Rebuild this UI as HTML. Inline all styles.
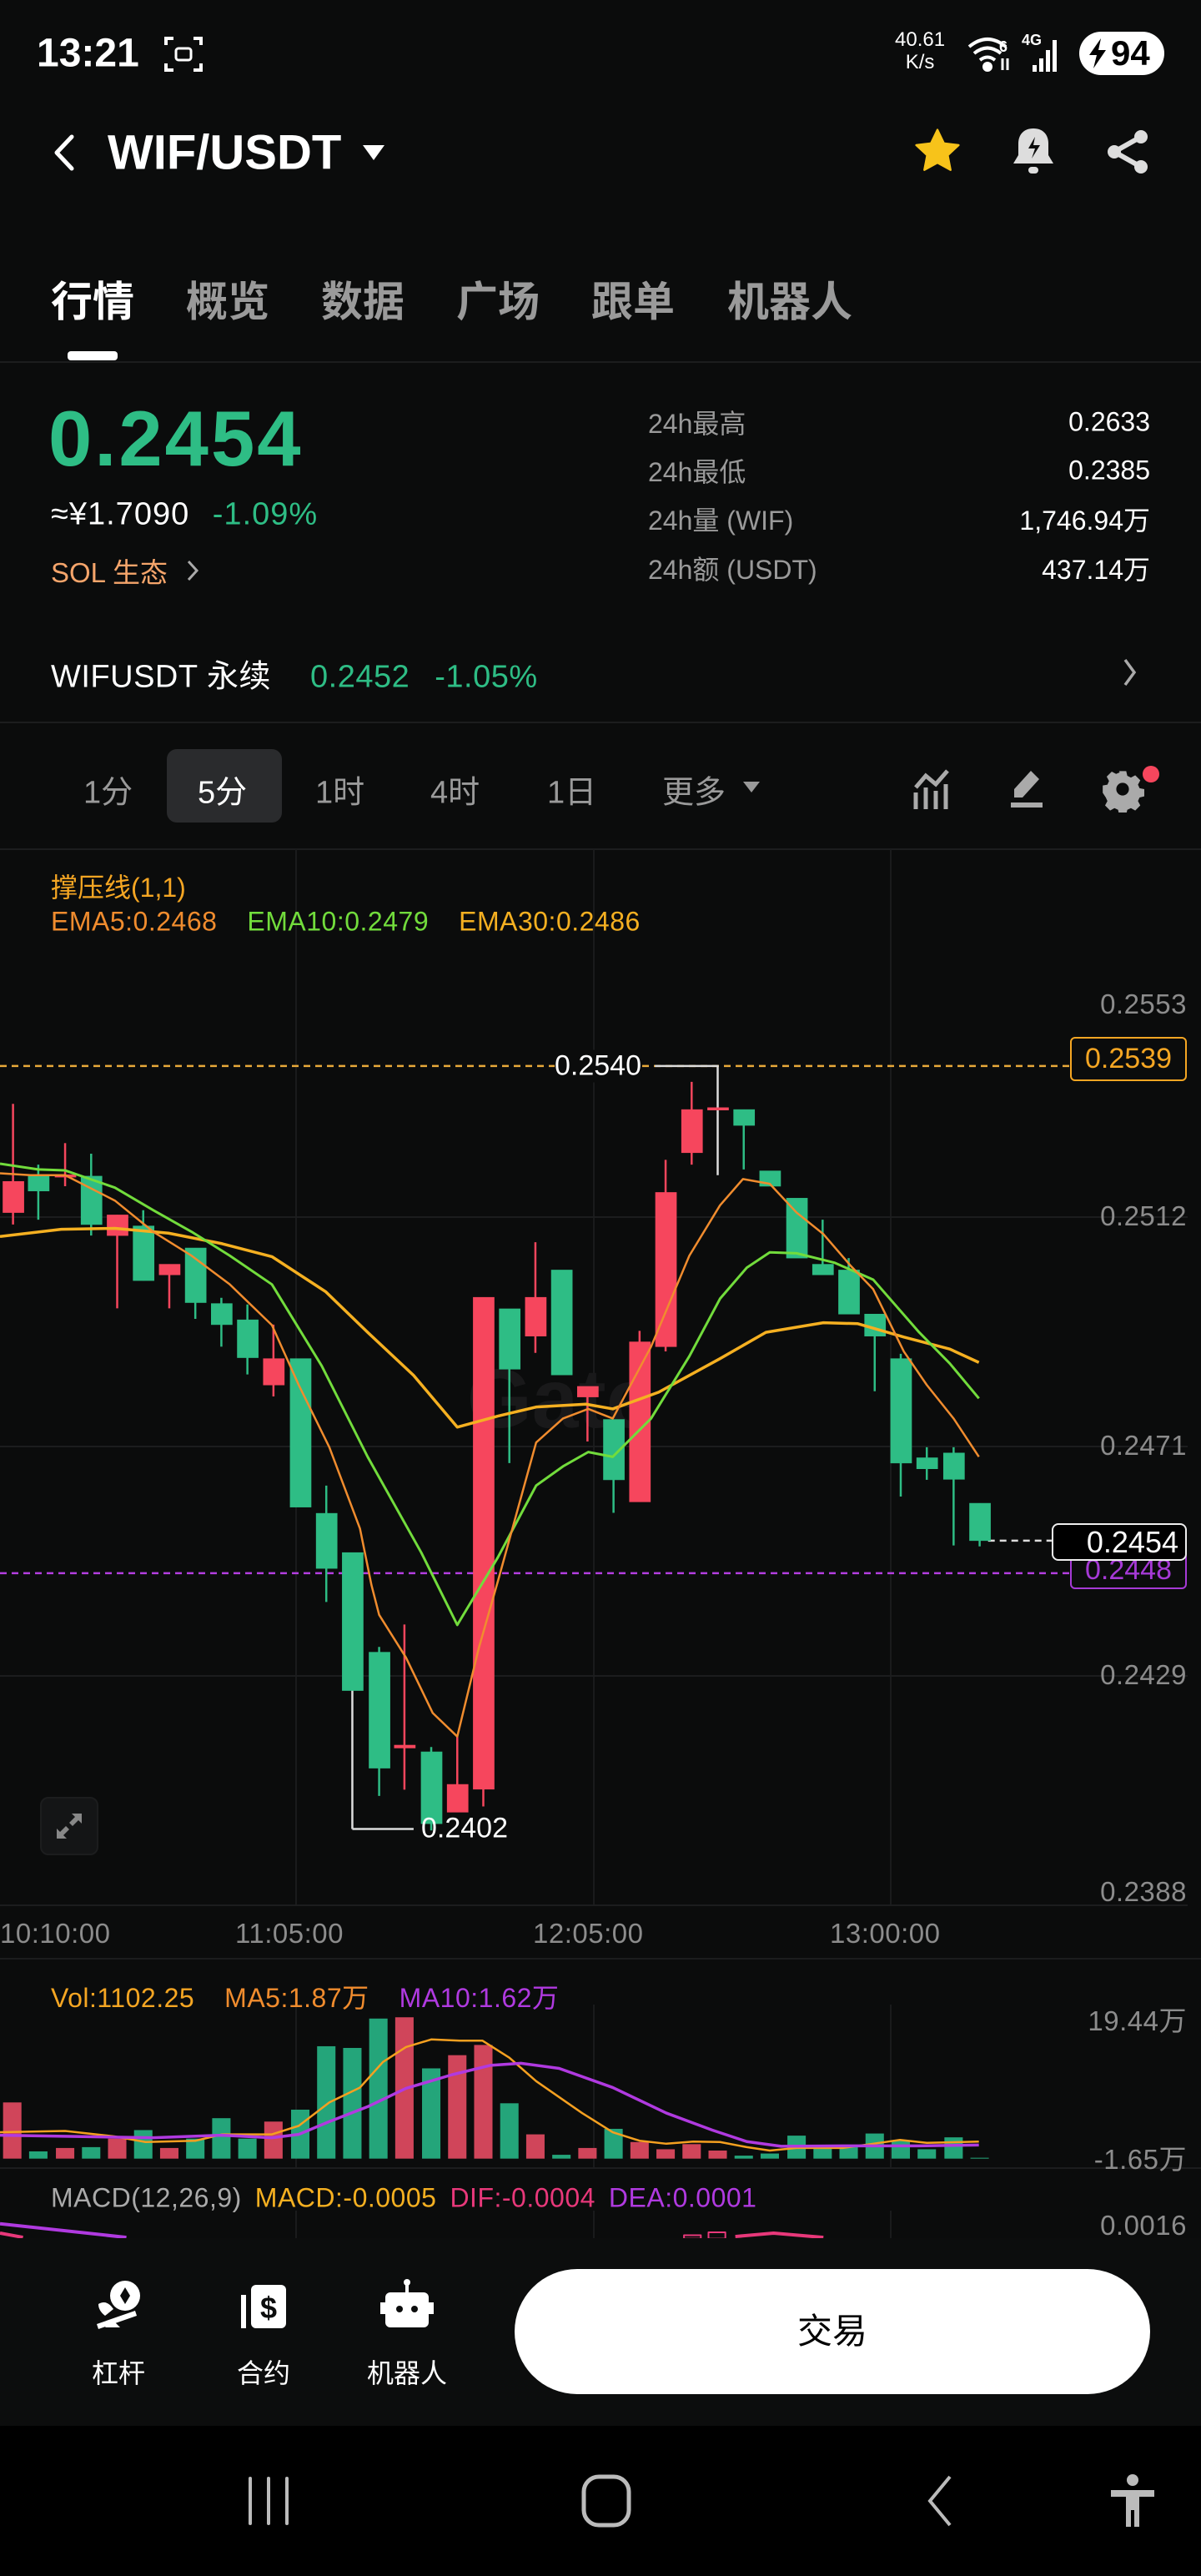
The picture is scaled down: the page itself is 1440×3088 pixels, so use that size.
<!DOCTYPE html>
<html><head><meta charset="utf-8">
<style>
*{margin:0;padding:0;box-sizing:border-box}
body{width:1440px;height:3088px;background:#0b0c0c;color:#fff;font-family:"Liberation Sans","Noto Sans CJK SC",sans-serif;position:relative;overflow:hidden}
.a{position:absolute;white-space:nowrap}
.vc{transform:translateY(-50%)}
.g{color:#2ebd85}
.gr{color:#9a9a9a}
.hl{position:absolute;left:0;height:2px;background:#1c1d1e}
.vl{position:absolute;width:2px;background:#1a1b1c}
.ax{position:absolute;right:17px;font-size:33px;color:#8c8c8c;transform:translateY(-50%);letter-spacing:0.5px}
</style></head><body>

<!-- status bar -->
<div class="a vc" style="left:44px;top:64px;font-size:48px;font-weight:bold">13:21</div>
<svg class="a" style="left:196px;top:42px" width="48" height="46" viewBox="0 0 48 46" fill="none" stroke="#fff" stroke-width="4"><path d="M3 12V4h9M36 4h9v8M3 34v8h9M36 42h9v-8"/><rect x="15" y="16" width="18" height="14" rx="3" fill="none" stroke="#fff" stroke-width="3"/></svg>
<div class="a" style="left:1073px;top:34px;font-size:24px;line-height:27px;text-align:center">40.61<br>K/s</div>
<svg class="a" style="left:1158px;top:40px" width="60" height="50" viewBox="0 0 60 50" fill="none" stroke="#fff" stroke-width="4"><path d="M4 16q22-18 44 0M10 24q16-13 32 0M17 32q9-7 18 0"/><circle cx="26" cy="40" r="4" fill="#fff"/><text x="40" y="22" fill="#fff" stroke="none" font-size="18" font-weight="bold" font-family="Liberation Sans">6</text><path d="M44 30v14M50 30v14" stroke-width="3"/></svg>
<div class="a" style="left:1225px;top:38px;font-size:18px;font-weight:bold">4G</div>
<svg class="a" style="left:1236px;top:46px" width="38" height="42" viewBox="0 0 38 42" fill="#fff"><rect x="2" y="32" width="5" height="8"/><rect x="10" y="24" width="5" height="16"/><rect x="18" y="14" width="5" height="26"/><rect x="26" y="2" width="5" height="38"/></svg>
<div class="a" style="left:1294px;top:38px;width:102px;height:52px;border-radius:26px;background:#fff;color:#000;font-size:42px;font-weight:bold;line-height:52px;padding-left:38px">94</div>
<svg class="a" style="left:1302px;top:44px" width="28" height="40" viewBox="0 0 28 40"><path d="M18 2L4 22h9l-4 16 15-22h-9z" fill="#000"/></svg>

<!-- header -->
<svg class="a" style="left:62px;top:160px" width="30" height="46" viewBox="0 0 30 46" fill="none" stroke="#fff" stroke-width="5" stroke-linecap="round" stroke-linejoin="round"><path d="M24 4L6 23l18 19"/></svg>
<div class="a vc" style="left:129px;top:183px;font-size:58px;font-weight:bold">WIF/USDT</div>
<svg class="a" style="left:433px;top:172px" width="30" height="22"><path d="M2 2h26L15 20z" fill="#fff"/></svg>
<svg class="a" style="left:1094px;top:152px" width="60" height="58" viewBox="0 0 24 24"><path d="M12 1.5l3.2 6.7 7.3.9-5.4 5 1.4 7.3L12 17.8l-6.5 3.6 1.4-7.3-5.4-5 7.3-.9z" fill="#f7c31a" stroke="#f7c31a" stroke-linejoin="round"/></svg>
<svg class="a" style="left:1211px;top:150px" width="56" height="62" viewBox="0 0 28 31"><path d="M14 2c-6 0-9 4-9 9v7l-3 5h24l-3-5v-7c0-5-3-9-9-9z" fill="#ddd"/><path d="M15 7l-4 7h4l-2 6 5-8h-4z" fill="#0b0c0c"/><rect x="11" y="25" width="6" height="4" rx="2" fill="#ddd"/></svg>
<svg class="a" style="left:1324px;top:154px" width="56" height="56" viewBox="0 0 28 28" fill="#ddd"><circle cx="22" cy="5" r="4"/><circle cx="6" cy="14" r="4"/><circle cx="22" cy="23" r="4"/><path d="M22 5L6 14l16 9" stroke="#ddd" stroke-width="3" fill="none"/></svg>

<!-- tabs -->
<div class="a vc" style="left:61px;top:358px;font-size:50px;font-weight:bold">行情</div>
<div class="a vc gr" style="left:223px;top:358px;font-size:50px;font-weight:bold">概览</div>
<div class="a vc gr" style="left:385px;top:358px;font-size:50px;font-weight:bold">数据</div>
<div class="a vc gr" style="left:547px;top:358px;font-size:50px;font-weight:bold">广场</div>
<div class="a vc gr" style="left:709px;top:358px;font-size:50px;font-weight:bold">跟单</div>
<div class="a vc gr" style="left:872px;top:358px;font-size:50px;font-weight:bold">机器人</div>
<div class="a" style="left:81px;top:421px;width:60px;height:11px;border-radius:4px;background:#fff"></div>
<div class="hl" style="top:433px;width:1440px"></div>

<!-- price -->
<div class="a vc g" style="left:58px;top:526px;font-size:94px;font-weight:bold;letter-spacing:3px">0.2454</div>
<div class="a vc" style="left:61px;top:617px;font-size:38px;letter-spacing:1px">≈¥1.7090 <span class="g" style="margin-left:16px">-1.09%</span></div>
<div class="a vc" style="left:61px;top:684px;font-size:33px;color:#f5a56b">SOL 生态</div>
<svg class="a" style="left:223px;top:670px" width="16" height="28" fill="none" stroke="#aaa" stroke-width="3"><path d="M3 3l10 11L3 25"/></svg>
<div class="a vc gr" style="left:777px;top:506px;font-size:32px">24h最高</div>
<div class="a vc gr" style="left:777px;top:564px;font-size:32px">24h最低</div>
<div class="a vc gr" style="left:777px;top:622px;font-size:32px">24h量 (WIF)</div>
<div class="a vc gr" style="left:777px;top:681px;font-size:32px">24h额 (USDT)</div>
<div class="a vc" style="right:61px;top:506px;font-size:32px">0.2633</div>
<div class="a vc" style="right:61px;top:564px;font-size:32px">0.2385</div>
<div class="a vc" style="right:61px;top:622px;font-size:32px">1,746.94万</div>
<div class="a vc" style="right:61px;top:681px;font-size:32px">437.14万</div>

<div class="a vc" style="left:61px;top:807px;font-size:38px;letter-spacing:0.5px">WIFUSDT 永续 <span class="g" style="margin-left:36px">0.2452</span><span class="g" style="margin-left:30px">-1.05%</span></div>
<svg class="a" style="left:1346px;top:788px" width="18" height="36" fill="none" stroke="#aaa" stroke-width="3.5"><path d="M3 3l11 15L3 33"/></svg>
<div class="hl" style="top:865px;width:1440px"></div>

<!-- intervals -->
<div class="a" style="left:200px;top:898px;width:138px;height:88px;border-radius:12px;background:#2a2b2d"></div>
<div class="a vc gr" style="left:100px;top:946px;font-size:38px">1分</div>
<div class="a vc" style="left:237px;top:946px;font-size:38px">5分</div>
<div class="a vc gr" style="left:378px;top:946px;font-size:38px">1时</div>
<div class="a vc gr" style="left:516px;top:946px;font-size:38px">4时</div>
<div class="a vc gr" style="left:656px;top:946px;font-size:38px">1日</div>
<div class="a vc gr" style="left:794px;top:946px;font-size:38px">更多</div>
<svg class="a" style="left:890px;top:936px" width="22" height="16"><path d="M1 1h20L11 14z" fill="#999"/></svg>
<svg class="a" style="left:1094px;top:920px" width="48" height="52" viewBox="0 0 48 52" fill="none" stroke="#aaa" stroke-width="5"><path d="M4 50V30M16 50V24M28 50V28M40 50V20M4 24l12-14 12 10L42 4"/></svg>
<svg class="a" style="left:1208px;top:920px" width="44" height="50" viewBox="0 0 44 50"><path d="M28 4l10 10-20 22H8V26z" fill="#aaa"/><rect x="4" y="42" width="38" height="6" fill="#aaa"/></svg>
<svg class="a" style="left:1320px;top:918px" width="52" height="56" viewBox="0 0 24 24"><path d="M10 2h4l.6 2.6 2 1 2.4-1.3 2.8 2.8-1.3 2.4.9 2 2.6.5v4l-2.6.6-.9 2 1.3 2.4-2.8 2.8-2.4-1.3-2 .9-.6 2.6h-4l-.5-2.6-2-.9-2.4 1.3-2.8-2.8 1.3-2.4-.9-2L1 14v-4l2.6-.5.9-2-1.3-2.4 2.8-2.8 2.4 1.3 2-.9z" fill="#aaa"/><circle cx="12" cy="12" r="3.5" fill="#0b0c0c"/></svg>
<div class="a" style="left:1370px;top:918px;width:20px;height:20px;border-radius:50%;background:#f6465d"></div>
<div class="hl" style="top:1017px;width:1440px"></div>

<!-- grid -->
<div class="vl" style="left:354px;top:1018px;height:1266px"></div>
<div class="vl" style="left:711px;top:1018px;height:1266px"></div>
<div class="vl" style="left:1067px;top:1018px;height:1266px"></div>
<div class="vl" style="left:354px;top:2403px;height:195px"></div>
<div class="vl" style="left:711px;top:2403px;height:195px"></div>
<div class="vl" style="left:1067px;top:2403px;height:195px"></div>
<div class="vl" style="left:354px;top:2650px;height:33px"></div>
<div class="vl" style="left:711px;top:2650px;height:33px"></div>
<div class="vl" style="left:1067px;top:2650px;height:33px"></div>
<div class="hl" style="top:1458px;width:1424px"></div>
<div class="hl" style="top:1733px;width:1424px"></div>
<div class="hl" style="top:2008px;width:1424px"></div>
<div class="hl" style="top:2283px;width:1424px"></div>
<div class="hl" style="top:2347px;width:1440px"></div>
<div class="hl" style="top:2598px;width:1440px"></div>

<div class="a" style="left:560px;top:1620px;font-size:100px;font-weight:bold;color:#19191a">Gate</div>

<!-- chart svg -->
<svg class="a" style="left:0;top:1000px" width="1440" height="1700" viewBox="0 0 1568 2961" preserveAspectRatio="none">
<g stroke-width="2.5" vector-effect="non-scaling-stroke">
<line x1="0" y1="484" x2="1397" y2="484" stroke="#e8a93a" stroke-dasharray="8 6" vector-effect="non-scaling-stroke"/>
<line x1="0" y1="1543" x2="1397" y2="1543" stroke="#b43ee0" stroke-dasharray="8 6" vector-effect="non-scaling-stroke"/>
<line x1="1290" y1="1475" x2="1373" y2="1475" stroke="#ddd" stroke-dasharray="8 6" vector-effect="non-scaling-stroke"/>
<polyline points="855,484 937,484 937,712" fill="none" stroke="#ddd" vector-effect="non-scaling-stroke"/>
</g>
<g fill="#2ebd85" stroke="#2ebd85">
<g stroke-width="2.5">
<line x1="50" y1="690" x2="50" y2="805" vector-effect="non-scaling-stroke"/>
<line x1="119" y1="667" x2="119" y2="838" vector-effect="non-scaling-stroke"/>
<line x1="187" y1="785" x2="187" y2="932" vector-effect="non-scaling-stroke"/>
<line x1="255" y1="864" x2="255" y2="1012" vector-effect="non-scaling-stroke"/>
<line x1="289" y1="968" x2="289" y2="1070" vector-effect="non-scaling-stroke"/>
<line x1="323" y1="982" x2="323" y2="1128" vector-effect="non-scaling-stroke"/>
<line x1="426" y1="1360" x2="426" y2="1603" vector-effect="non-scaling-stroke"/>
<line x1="495" y1="1697" x2="495" y2="2008" vector-effect="non-scaling-stroke"/>
<line x1="563" y1="1906" x2="563" y2="2080" vector-effect="non-scaling-stroke"/>
<line x1="665" y1="991" x2="665" y2="1313" vector-effect="non-scaling-stroke"/>
<line x1="801" y1="1222" x2="801" y2="1417" vector-effect="non-scaling-stroke"/>
<line x1="971" y1="575" x2="971" y2="700" vector-effect="non-scaling-stroke"/>
<line x1="1074" y1="805" x2="1074" y2="920" vector-effect="non-scaling-stroke"/>
<line x1="1108" y1="885" x2="1108" y2="1002" vector-effect="non-scaling-stroke"/>
<line x1="1142" y1="1002" x2="1142" y2="1163" vector-effect="non-scaling-stroke"/>
<line x1="1176" y1="1085" x2="1176" y2="1383" vector-effect="non-scaling-stroke"/>
<line x1="1210" y1="1280" x2="1210" y2="1348" vector-effect="non-scaling-stroke"/>
<line x1="1245" y1="1280" x2="1245" y2="1485" vector-effect="non-scaling-stroke"/>
<line x1="1279" y1="1397" x2="1279" y2="1487" vector-effect="non-scaling-stroke"/>
<line x1="460" y1="1788" x2="460" y2="2077" stroke="#ddd" vector-effect="non-scaling-stroke"/>
<line x1="460" y1="2077" x2="540" y2="2077" stroke="#ddd" vector-effect="non-scaling-stroke"/>
</g>
<rect x="37" y="714" width="27" height="31"/>
<rect x="106" y="714" width="27" height="101"/>
<rect x="174" y="818" width="27" height="114"/>
<rect x="242" y="864" width="27" height="114"/>
<rect x="276" y="980" width="27" height="44"/>
<rect x="310" y="1014" width="27" height="79"/>
<rect x="379" y="1095" width="27" height="310"/>
<rect x="413" y="1418" width="27" height="115"/>
<rect x="447" y="1500" width="27" height="288"/>
<rect x="482" y="1708" width="27" height="242"/>
<rect x="550" y="1916" width="27" height="150"/>
<rect x="652" y="991" width="27" height="126"/>
<rect x="720" y="910" width="27" height="219"/>
<rect x="788" y="1222" width="27" height="126"/>
<rect x="958" y="575" width="27" height="33"/>
<rect x="992" y="703" width="27" height="32"/>
<rect x="1027" y="760" width="27" height="125"/>
<rect x="1061" y="898" width="27" height="22"/>
<rect x="1095" y="910" width="27" height="92"/>
<rect x="1129" y="1002" width="27" height="46"/>
<rect x="1163" y="1095" width="27" height="218"/>
<rect x="1197" y="1302" width="27" height="23"/>
<rect x="1232" y="1292" width="27" height="55"/>
<rect x="1266" y="1397" width="27" height="78"/>
</g>
<g fill="#f6465d" stroke="#f6465d">
<g stroke-width="2.5">
<line x1="17" y1="563" x2="17" y2="815" vector-effect="non-scaling-stroke"/>
<line x1="85" y1="645" x2="85" y2="735" vector-effect="non-scaling-stroke"/>
<line x1="153" y1="795" x2="153" y2="990" vector-effect="non-scaling-stroke"/>
<line x1="221" y1="898" x2="221" y2="990" vector-effect="non-scaling-stroke"/>
<line x1="357" y1="1024" x2="357" y2="1174" vector-effect="non-scaling-stroke"/>
<line x1="528" y1="1650" x2="528" y2="1995" vector-effect="non-scaling-stroke"/>
<line x1="597" y1="1884" x2="597" y2="2042" vector-effect="non-scaling-stroke"/>
<line x1="631" y1="967" x2="631" y2="2030" vector-effect="non-scaling-stroke"/>
<line x1="699" y1="852" x2="699" y2="1083" vector-effect="non-scaling-stroke"/>
<line x1="767" y1="1153" x2="767" y2="1268" vector-effect="non-scaling-stroke"/>
<line x1="835" y1="1037" x2="835" y2="1394" vector-effect="non-scaling-stroke"/>
<line x1="869" y1="680" x2="869" y2="1080" vector-effect="non-scaling-stroke"/>
<line x1="903" y1="517" x2="903" y2="690" vector-effect="non-scaling-stroke"/>
</g>
<rect x="4" y="725" width="27" height="65"/>
<rect x="72" y="711" width="27" height="5"/>
<rect x="140" y="795" width="27" height="43"/>
<rect x="208" y="898" width="27" height="22"/>
<rect x="344" y="1095" width="27" height="55"/>
<rect x="515" y="1902" width="27" height="6"/>
<rect x="584" y="1984" width="27" height="58"/>
<rect x="618" y="967" width="27" height="1027"/>
<rect x="686" y="967" width="27" height="81"/>
<rect x="754" y="1153" width="27" height="22"/>
<rect x="822" y="1060" width="27" height="334"/>
<rect x="856" y="748" width="27" height="322"/>
<rect x="890" y="575" width="27" height="90"/>
<rect x="924" y="571" width="27" height="5"/>
</g>
<g fill="none" stroke-width="3.5" stroke-linejoin="round">
<polyline vector-effect="non-scaling-stroke" stroke="#f5b021" points="0,840 80,825 150,823 220,833 290,855 355,882 425,955 480,1040 540,1130 597,1238 650,1215 700,1196 765,1190 800,1200 860,1165 940,1095 1000,1040 1075,1020 1120,1022 1180,1050 1240,1075 1278,1103"/>
<polyline vector-effect="non-scaling-stroke" stroke="#72dc3c" stroke-width="3" points="0,688 50,700 85,702 150,738 200,785 250,830 300,880 355,940 420,1110 480,1300 550,1500 597,1651 650,1510 700,1360 735,1320 768,1290 800,1300 850,1220 900,1090 940,970 975,905 1005,873 1040,875 1090,895 1140,930 1200,1040 1240,1105 1278,1178"/>
<polyline vector-effect="non-scaling-stroke" stroke="#f08c2e" stroke-width="2.5" points="0,708 40,712 85,712 150,765 200,830 250,880 300,940 355,1025 390,1150 430,1280 470,1450 485,1568 495,1630 530,1719 565,1835 597,1884 625,1700 650,1560 700,1270 735,1220 768,1200 800,1220 850,1070 900,880 940,775 970,720 1005,730 1040,790 1075,835 1110,900 1140,950 1180,1080 1210,1150 1245,1220 1278,1300"/>
</g>
<g transform="matrix(1 0 0 0.8889 0 1568)">
<g fill="#d0455a">
<rect x="4" y="1215" width="24" height="132"/><rect x="73" y="1322" width="24" height="25"/><rect x="141" y="1300" width="24" height="47"/><rect x="209" y="1322" width="24" height="25"/><rect x="345" y="1260" width="24" height="87"/><rect x="516" y="1015" width="24" height="332"/><rect x="585" y="1104" width="24" height="243"/><rect x="619" y="1080" width="24" height="267"/><rect x="687" y="1290" width="24" height="57"/><rect x="755" y="1322" width="24" height="25"/><rect x="823" y="1308" width="24" height="39"/><rect x="857" y="1325" width="24" height="22"/><rect x="891" y="1313" width="24" height="34"/><rect x="925" y="1328" width="24" height="19"/>
</g>
<g fill="#24a57a">
<rect x="38" y="1330" width="24" height="17"/><rect x="107" y="1320" width="24" height="27"/><rect x="175" y="1280" width="24" height="67"/><rect x="243" y="1300" width="24" height="47"/><rect x="277" y="1252" width="24" height="95"/><rect x="311" y="1300" width="24" height="47"/><rect x="380" y="1232" width="24" height="115"/><rect x="414" y="1083" width="24" height="264"/><rect x="448" y="1087" width="24" height="260"/><rect x="482" y="1018" width="24" height="329"/><rect x="551" y="1135" width="24" height="212"/><rect x="653" y="1217" width="24" height="130"/><rect x="721" y="1338" width="24" height="9"/><rect x="789" y="1277" width="24" height="70"/><rect x="959" y="1340" width="24" height="7"/><rect x="993" y="1335" width="24" height="12"/><rect x="1028" y="1293" width="24" height="54"/><rect x="1062" y="1318" width="24" height="29"/><rect x="1096" y="1318" width="24" height="29"/><rect x="1130" y="1288" width="24" height="59"/><rect x="1164" y="1305" width="24" height="42"/><rect x="1198" y="1325" width="24" height="22"/><rect x="1233" y="1297" width="24" height="50"/><rect x="1267" y="1345" width="24" height="2"/>
</g>
<g fill="none" stroke-linejoin="round">
<polyline vector-effect="non-scaling-stroke" stroke="#f5a020" stroke-width="2.5" points="0,1285 85,1282 150,1295 190,1308 255,1305 290,1290 355,1290 390,1270 430,1215 470,1180 500,1120 530,1085 563,1067 600,1070 630,1070 665,1110 700,1165 760,1240 800,1285 835,1305 870,1312 905,1307 940,1308 975,1320 1005,1328 1040,1322 1100,1322 1140,1312 1175,1303 1210,1310 1278,1307"/>
<polyline vector-effect="non-scaling-stroke" stroke="#b03ae0" stroke-width="3.5" points="0,1292 100,1295 200,1298 290,1292 355,1298 390,1290 430,1260 480,1225 530,1182 590,1150 640,1128 680,1123 730,1135 800,1180 870,1240 930,1280 975,1307 1020,1318 1100,1317 1200,1317 1278,1315"/>
<polyline vector-effect="non-scaling-stroke" stroke="#b03ae0" stroke-width="4" points="0,1500 165,1532"/>
<polyline vector-effect="non-scaling-stroke" stroke="#e8387a" stroke-width="4" points="0,1522 30,1532"/>
<polyline vector-effect="non-scaling-stroke" stroke="#e8387a" stroke-width="4" points="960,1530 1010,1522 1075,1532"/>
<rect x="893" y="1527" width="22" height="8" stroke="#e8387a" stroke-width="2" vector-effect="non-scaling-stroke"/>
<rect x="925" y="1520" width="22" height="15" stroke="#e8387a" stroke-width="2" vector-effect="non-scaling-stroke"/>
</g>
</g>
</svg>

<!-- chart labels -->
<div class="a vc" style="left:61px;top:1062px;font-size:32px;color:#f5a623">撑压线(1,1)</div>
<div class="a vc" style="left:61px;top:1105px;font-size:32px;letter-spacing:0.5px"><span style="color:#f08c2e">EMA5:0.2468</span><span style="color:#72dc3c;margin-left:36px">EMA10:0.2479</span><span style="color:#f5b021;margin-left:36px">EMA30:0.2486</span></div>
<div class="ax" style="top:1204px">0.2553</div>
<div class="ax" style="top:1458px">0.2512</div>
<div class="ax" style="top:1733px">0.2471</div>
<div class="ax" style="top:2008px">0.2429</div>
<div class="ax" style="top:2268px">0.2388</div>
<div class="a" style="left:1283px;top:1243px;width:140px;height:53px;border:2px solid #f5a623;border-radius:6px;color:#f5a623;font-size:34px;text-align:center;line-height:49px;background:#0b0c0c">0.2539</div>
<div class="a vc" style="left:665px;top:1278px;font-size:34px;background:#0b0c0c">0.2540</div>
<div class="a" style="left:1283px;top:1860px;width:140px;height:45px;border:2px solid #a63ad6;border-radius:6px;color:#a63ad6;font-size:34px;text-align:center;line-height:40px;background:#0b0c0c">0.2448</div>
<div class="a" style="left:1261px;top:1826px;width:162px;height:45px;border:2px solid #eee;border-radius:8px;font-size:36px;text-align:right;padding-right:8px;line-height:41px;background:#000">0.2454</div>
<div class="a vc" style="left:505px;top:2192px;font-size:34px">0.2402</div>
<div class="a" style="left:48px;top:2154px;width:70px;height:70px;border-radius:10px;background:#141516;border:2px solid #1c1d1e"></div>
<svg class="a" style="left:64px;top:2170px" width="38" height="38" viewBox="0 0 38 38" fill="#888"><path d="M22 4h12v12l-4-4-7 7-4-4 7-7zM16 34H4V22l4 4 7-7 4 4-7 7z"/></svg>
<div class="a vc" style="left:0;top:2318px;font-size:33px;color:#8c8c8c;letter-spacing:0.5px">10:10:00</div>
<div class="a vc" style="left:282px;top:2318px;font-size:33px;color:#8c8c8c;letter-spacing:0.5px">11:05:00</div>
<div class="a vc" style="left:639px;top:2318px;font-size:33px;color:#8c8c8c;letter-spacing:0.5px">12:05:00</div>
<div class="a vc" style="left:995px;top:2318px;font-size:33px;color:#8c8c8c;letter-spacing:0.5px">13:00:00</div>
<div class="a vc" style="left:61px;top:2393px;font-size:32px;letter-spacing:0.5px"><span style="color:#f5a623">Vol:1102.25</span><span style="color:#f08c2e;margin-left:36px">MA5:1.87万</span><span style="color:#b03ae0;margin-left:36px">MA10:1.62万</span></div>
<div class="ax" style="top:2420px">19.44万</div>
<div class="ax" style="top:2586px">-1.65万</div>
<div class="a vc" style="left:61px;top:2635px;font-size:32px;letter-spacing:0.5px"><span style="color:#aaa">MACD(12,26,9)</span><span style="color:#f5b021;margin-left:16px">MACD:-0.0005</span><span style="color:#e8387a;margin-left:16px">DIF:-0.0004</span><span style="color:#b03ae0;margin-left:16px">DEA:0.0001</span></div>
<div class="ax" style="top:2668px">0.0016</div>

<!-- bottom bar -->
<div class="a" style="left:0;top:2683px;width:1440px;height:225px;background:#0c0d0d"></div>
<svg class="a" style="left:112px;top:2730px" width="60" height="66" viewBox="0 0 60 66" fill="#fff"><circle cx="38" cy="22" r="18"/><path d="M38 12l6 10-6 10-6-10z" fill="#0c0d0d"/><path d="M6 32q10-6 18 6l-10 8q-8-6-8-14z"/><path d="M4 56l46-16 2 6-46 16z"/><path d="M22 50l10 10H14z"/></svg>
<svg class="a" style="left:287px;top:2735px" width="56" height="58" viewBox="0 0 56 58" fill="#fff"><rect x="2" y="16" width="6" height="40"/><rect x="14" y="4" width="42" height="52" rx="6"/><text x="35" y="44" fill="#0c0d0d" font-size="36" font-weight="bold" font-family="Liberation Sans" text-anchor="middle">$</text></svg>
<svg class="a" style="left:456px;top:2730px" width="64" height="64" viewBox="0 0 64 64" fill="#fff"><circle cx="32" cy="6" r="4"/><rect x="30" y="8" width="4" height="10"/><rect x="6" y="18" width="52" height="42" rx="6"/><rect x="0" y="30" width="6" height="14"/><rect x="58" y="30" width="6" height="14"/><circle cx="23" cy="38" r="4" fill="#0c0d0d"/><circle cx="41" cy="38" r="4" fill="#0c0d0d"/></svg>
<div class="a vc" style="left:110px;top:2843px;font-size:32px">杠杆</div>
<div class="a vc" style="left:284px;top:2843px;font-size:32px">合约</div>
<div class="a vc" style="left:440px;top:2843px;font-size:32px">机器人</div>
<div class="a" style="left:617px;top:2720px;width:762px;height:150px;border-radius:75px;background:#fff;color:#000;font-size:42px;text-align:center;line-height:150px">交易</div>

<!-- nav -->
<div class="a" style="left:0;top:2908px;width:1440px;height:180px;background:#000"></div>
<svg class="a" style="left:290px;top:2965px" width="70" height="66" fill="#bbb"><rect x="8" y="4" width="4" height="58" rx="2"/><rect x="30" y="4" width="4" height="58" rx="2"/><rect x="52" y="4" width="4" height="58" rx="2"/></svg>
<svg class="a" style="left:695px;top:2965px" width="64" height="66" fill="none" stroke="#bbb" stroke-width="5"><rect x="5" y="4" width="54" height="58" rx="18"/></svg>
<svg class="a" style="left:1105px;top:2965px" width="40" height="66" fill="none" stroke="#bbb" stroke-width="4"><path d="M34 4L10 33l24 29"/></svg>
<svg class="a" style="left:1330px;top:2965px" width="56" height="66" viewBox="0 0 56 66" fill="#bbb"><circle cx="28" cy="8" r="7"/><path d="M2 20h52v8H36v36h-6V44h-4v20h-6V28H2z"/></svg>
</body></html>
